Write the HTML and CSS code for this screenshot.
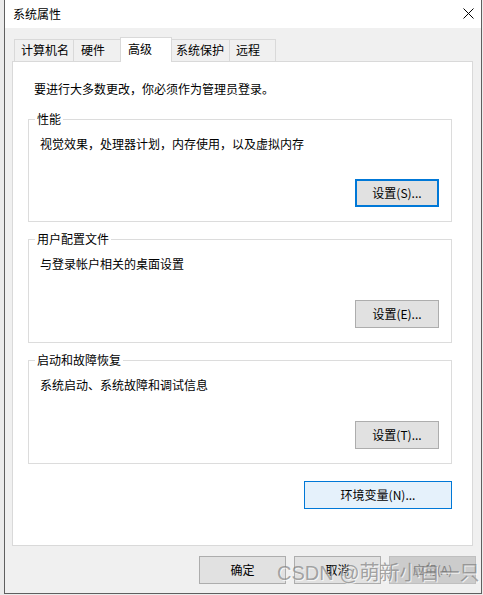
FILE: index.html
```html
<!DOCTYPE html>
<html lang="zh-CN">
<head>
<meta charset="utf-8">
<title>系统属性</title>
<link rel="stylesheet" href="styles.css">
</head>
<body>
<div class="window">
  <div class="titlebar">
    <span class="title">系统属性</span>
    <svg class="close" width="11" height="11" viewBox="0 0 11 11"><path d="M0.5 0.5 L10.5 10.5 M10.5 0.5 L0.5 10.5" stroke="#000" stroke-width="1" fill="none"/></svg>
  </div>
  <div class="dialog">
    <div class="tabs">
      <div class="tab tab-computer">计算机名</div>
      <div class="tab tab-hardware">硬件</div>
      <div class="tab tab-active">高级</div>
      <div class="tab tab-protect">系统保护</div>
      <div class="tab tab-remote">远程</div>
    </div>
    <div class="panel">
      <p class="intro">要进行大多数更改，你必须作为管理员登录。</p>
      <div class="group group-first">
        <span class="group-title">性能</span>
        <p class="group-desc">视觉效果，处理器计划，内存使用，以及虚拟内存</p>
        <button class="btn btn-set btn-focus">设置(S)...</button>
      </div>
      <div class="group">
        <span class="group-title">用户配置文件</span>
        <p class="group-desc">与登录帐户相关的桌面设置</p>
        <button class="btn btn-set">设置(E)...</button>
      </div>
      <div class="group">
        <span class="group-title">启动和故障恢复</span>
        <p class="group-desc">系统启动、系统故障和调试信息</p>
        <button class="btn btn-set">设置(T)...</button>
      </div>
      <button class="btn btn-env">环境变量(N)...</button>
    </div>
    <div class="footer">
      <button class="btn btn-footer">确定</button>
      <button class="btn btn-footer">取消</button>
      <button class="btn btn-footer btn-disabled">应用(A)</button>
    </div>
  </div>
  <div class="watermark">CSDN @萌新小白一只</div>
</div>
</body>
</html>
```

FILE: styles.css
```css
* { box-sizing: border-box; }

html, body {
  margin: 0;
  padding: 0;
}

body {
  background: #ebebeb;
  font-family: "Noto Sans CJK SC", "Noto Sans", sans-serif;
  font-size: 12px;
  color: #000;
  width: 483px;
  height: 595px;
  overflow: hidden;
}

.window {
  position: relative;
  margin-left: 4px;
  width: 478px;
  height: 594px;
  background: #f0f0f0;
  border-left: 1px solid #5f5f5f;
  border-right: 1px solid #5f5f5f;
  border-bottom: 1px solid #5f5f5f;
}

.titlebar {
  height: 28px;
  background: #fff;
  display: flex;
  align-items: center;
  justify-content: space-between;
  padding: 0 8px 1px 8px;
}

.title {
  font-size: 12px;
  line-height: 16px;
}

.close {
  display: block;
  margin-right: -0.5px;
}

.dialog {
  padding-top: 9px;
}

.tabs {
  display: flex;
  align-items: flex-end;
  height: 24px;
  margin-left: 9px;
}

.tab {
  height: 22px;
  line-height: 20px;
  padding-left: 6px;
  background: #f0f0f0;
  border: 1px solid #d9d9d9;
  border-bottom: none;
  margin-left: -1px;
  white-space: nowrap;
}

.tab-computer { width: 60px; margin-left: 0; }
.tab-hardware { width: 48px; padding-left: 7px; }
.tab-protect { width: 59px; padding-left: 4px; }
.tab-remote { width: 47px; padding-left: 6px; }

.tab-active {
  position: relative;
  z-index: 1;
  width: 52px;
  height: 25px;
  line-height: 22px;
  padding-left: 7px;
  background: #fff;
  margin-bottom: -1px;
}

.panel {
  width: 461px;
  height: 485px;
  margin-left: 7px;
  background: #fff;
  border: 1px solid #d9d9d9;
  padding-top: 19px;
  display: flex;
  flex-direction: column;
}

.intro {
  margin: 0 0 22px 21px;
  line-height: 16px;
}

.group {
  height: 104px;
  margin: 0 20px 17px 15px;
  border: 1px solid #dcdcdc;
  display: flex;
  flex-direction: column;
  padding-bottom: 14px;
}

.group-first {
  height: 103px;
}

.group-title {
  align-self: flex-start;
  margin: -9px 0 0 6px;
  padding: 0 2px;
  line-height: 16px;
  background: #fff;
}

.group-desc {
  margin: 9px 0 0 11px;
  line-height: 16px;
}

.btn {
  font-family: "Noto Sans CJK SC", "Noto Sans", sans-serif;
  font-size: 12px;
  color: #000;
  background: #e1e1e1;
  border: 1px solid #adadad;
  padding: 0;
  margin: 0;
  height: 28px;
  line-height: 16px;
  text-align: center;
}

.btn-set {
  align-self: flex-end;
  width: 84px;
  margin-top: auto;
  margin-right: 12px;
}

.btn-focus {
  border: 2px solid #0078d7;
}

.btn-env {
  align-self: flex-end;
  width: 148px;
  margin-right: 20px;
  background: #e5f1fb;
  border: 1px solid #0078d7;
}

.footer {
  display: flex;
  justify-content: flex-end;
  gap: 8px;
  margin-top: 10px;
  padding-right: 5px;
}

.btn-footer {
  width: 87px;
}

.btn-disabled {
  background: #cccccc;
  border-color: #bfbfbf;
  color: #838383;
}

.watermark {
  position: absolute;
  left: 272px;
  top: 561px;
  font-family: "Liberation Sans", "Noto Sans CJK SC", sans-serif;
  font-size: 20px;
  line-height: 24px;
  color: rgba(120, 120, 120, 0.65);
  text-shadow: 1px 1px 0 rgba(255, 255, 255, 0.7);
  white-space: nowrap;
  pointer-events: none;
}
```
